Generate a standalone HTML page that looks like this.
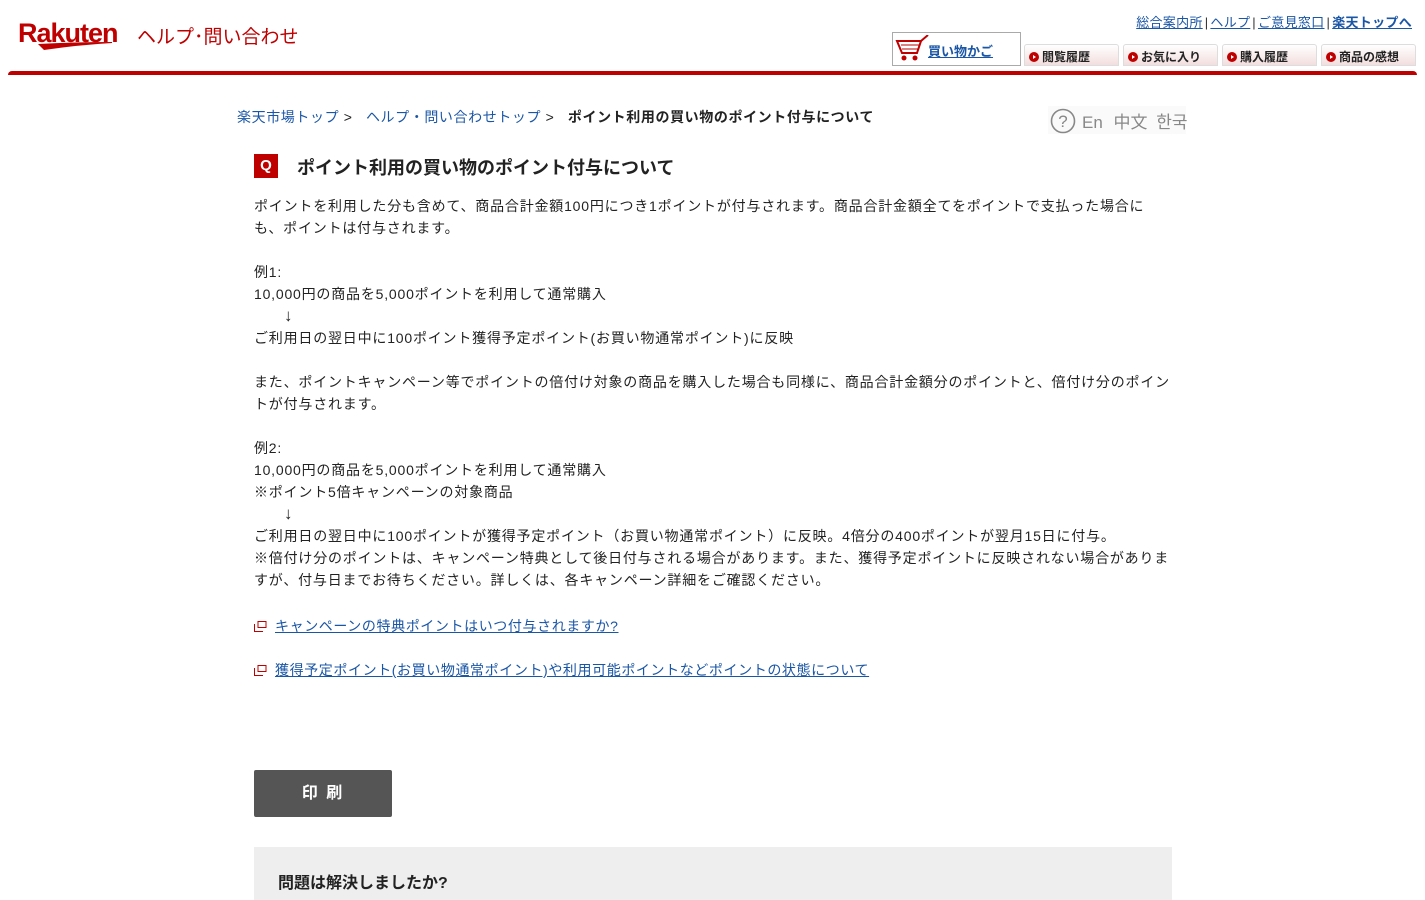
<!DOCTYPE html>
<html><head><meta charset="utf-8"><style>
*{margin:0;padding:0;box-sizing:border-box}
body{width:1425px;height:900px;overflow:hidden;background:#fff;font-family:"Liberation Sans","Noto Sans CJK JP",sans-serif;color:#222;position:relative}
.abs{position:absolute}
a{color:#1a56a6}
.logo{left:18px;top:18px;font-size:27px;font-weight:bold;color:#bf0000;letter-spacing:-1px}
.help{left:137px;top:22px;font-size:19px;color:#bf0000}
.redbar{left:8px;top:71px;width:1409px;height:4px;background:#bf0000;border-radius:4px 4px 0 0}
.toplinks{right:13px;top:12px;font-size:13px;letter-spacing:0.3px}
.toplinks a{color:#1a56a6}
.toplinks span{color:#333;margin:0 2px}
.cart{left:892px;top:32px;width:129px;height:34px;border:1px solid #aaa;background:#fff}
.tab{top:44px;height:22px;border:1px solid #ddd;border-radius:3px 3px 0 0;background:linear-gradient(#fff,#f3dede);font-size:12px;font-weight:bold;color:#222;padding:3px 0 0 4px;white-space:nowrap}
.tab i{display:inline-block;width:10px;height:10px;border-radius:50%;background:#bf0000;margin-right:3px;vertical-align:-1px;position:relative}
.tab i:after{content:"";position:absolute;left:4px;top:2.5px;border-left:3px solid #fff;border-top:2.5px solid transparent;border-bottom:2.5px solid transparent}
.bc{left:237px;top:107px;font-size:14px;letter-spacing:0.6px;white-space:nowrap}
.bc a{text-decoration:none;color:#1a56a6}
.lang{left:1048px;top:106px;width:138px;height:28px;background:#fafafa;font-size:17px;color:#888;white-space:nowrap}
.q{left:254px;top:154px;width:24px;height:24px;background:#bf0000;color:#fff;font-weight:bold;font-size:15px;text-align:center;line-height:24px}
.title{left:297px;top:154px;font-size:18px;font-weight:bold;color:#222}
.body{left:254px;top:195px;width:916px;font-size:14px;line-height:22px;color:#222;letter-spacing:0.8px}
.arr{padding-left:30px;font-size:17px}
.lnk{left:254px;font-size:14px;letter-spacing:0.6px}
.lnk svg{vertical-align:-1px;margin-right:8px}
.btn{left:254px;top:770px;width:138px;height:47px;background:#555;border-radius:2px;color:#fff;font-size:16px;font-weight:bold;text-align:center;line-height:47px;letter-spacing:2px}
.fb{left:254px;top:847px;width:918px;height:53px;background:#eee;font-size:16px;font-weight:bold;padding:22px 0 0 24px;color:#222}
</style></head><body>
<div class="abs logo">Rakuten</div>
<svg class="abs" style="left:38px;top:42px" width="74" height="10"><path d="M0 2 Q37 0 74 0 L74 1 Q40 3 6 8 Z" fill="#bf0000"/></svg>
<div class="abs help">ヘルプ･問い合わせ</div>
<div class="abs toplinks"><a href="#">総合案内所</a><span>|</span><a href="#">ヘルプ</a><span>|</span><a href="#">ご意見窓口</a><span>|</span><a href="#" style="font-weight:bold">楽天トップへ</a></div>
<div class="abs cart">
<svg class="abs" style="left:2px;top:2px" width="34" height="28"><path d="M2 6 H26 L22 18 H7 Z" fill="#fff" stroke="#bf0000" stroke-width="2"/><path d="M6 10 H24 M7 14 H23" stroke="#bf0000"/><path d="M26 6 L33 0" stroke="#bf0000" stroke-width="2"/><circle cx="9" cy="23" r="2.5" fill="#bf0000"/><circle cx="20" cy="23" r="2.5" fill="#bf0000"/></svg>
<a href="#" class="abs" style="left:35px;top:8px;font-size:13px;font-weight:bold">買い物かご</a></div>
<div class="abs tab" style="left:1024px;width:95px"><i></i>閲覧履歴</div>
<div class="abs tab" style="left:1123px;width:95px"><i></i>お気に入り</div>
<div class="abs tab" style="left:1222px;width:95px"><i></i>購入履歴</div>
<div class="abs tab" style="left:1321px;width:95px"><i></i>商品の感想</div>
<div class="abs redbar"></div>
<div class="abs bc"><a href="#">楽天市場トップ</a>&nbsp;&gt;&nbsp;&nbsp;&nbsp;<a href="#">ヘルプ・問い合わせトップ</a>&nbsp;&gt;&nbsp;&nbsp;&nbsp;<b>ポイント利用の買い物のポイント付与について</b></div>
<div class="abs lang"><svg class="abs" style="left:2px;top:2px" width="26" height="26"><circle cx="13" cy="13" r="11.5" fill="none" stroke="#888" stroke-width="1.6"/><text x="13" y="19" text-anchor="middle" font-size="17" fill="#888" font-family="Liberation Sans">?</text></svg><span class="abs" style="left:34px;top:2px">En <span style="margin-left:6px">中文</span> <span style="margin-left:4px">한국</span></span></div>
<div class="abs q">Q</div>
<div class="abs title">ポイント利用の買い物のポイント付与について</div>
<div class="abs body">ポイントを利用した分も含めて、商品合計金額100円につき1ポイントが付与されます。商品合計金額全てをポイントで支払った場合に<br>も、ポイントは付与されます。<br><br>例1:<br>10,000円の商品を5,000ポイントを利用して通常購入<br><span class="arr">↓</span><br>ご利用日の翌日中に100ポイント獲得予定ポイント(お買い物通常ポイント)に反映<br><br>また、ポイントキャンペーン等でポイントの倍付け対象の商品を購入した場合も同様に、商品合計金額分のポイントと、倍付け分のポイン<br>トが付与されます。<br><br>例2:<br>10,000円の商品を5,000ポイントを利用して通常購入<br>※ポイント5倍キャンペーンの対象商品<br><span class="arr">↓</span><br>ご利用日の翌日中に100ポイントが獲得予定ポイント（お買い物通常ポイント）に反映。4倍分の400ポイントが翌月15日に付与。<br>※倍付け分のポイントは、キャンペーン特典として後日付与される場合があります。また、獲得予定ポイントに反映されない場合がありま<br>すが、付与日までお待ちください。詳しくは、各キャンペーン詳細をご確認ください。</div>
<div class="abs lnk" style="top:616px"><svg width="13" height="11"><rect x="4" y="0.5" width="8" height="6" fill="none" stroke="#bf0000"/><path d="M0.5 3 V10.5 H9" fill="none" stroke="#bf0000"/></svg><a href="#">キャンペーンの特典ポイントはいつ付与されますか?</a></div>
<div class="abs lnk" style="top:660px"><svg width="13" height="11"><rect x="4" y="0.5" width="8" height="6" fill="none" stroke="#bf0000"/><path d="M0.5 3 V10.5 H9" fill="none" stroke="#bf0000"/></svg><a href="#">獲得予定ポイント(お買い物通常ポイント)や利用可能ポイントなどポイントの状態について</a></div>
<div class="abs btn">印 刷</div>
<div class="abs fb">問題は解決しましたか?</div>
</body></html>
